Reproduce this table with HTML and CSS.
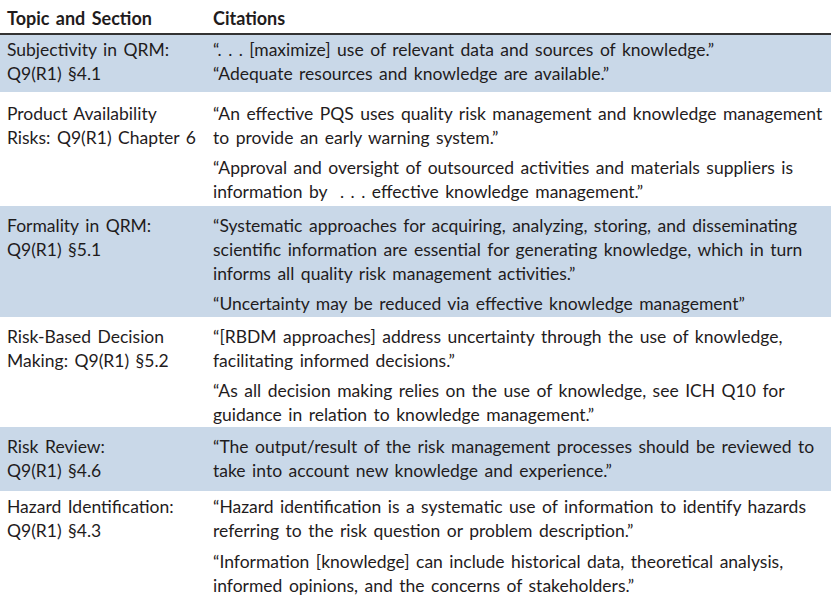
FILE: index.html
```html
<!DOCTYPE html>
<html>
<head>
<meta charset="utf-8">
<link rel="stylesheet" href="styles.css">
</head>
<body>
<table class="cit">
  <thead>
    <tr><th class="c1">Topic and Section</th><th class="c2">Citations</th></tr>
  </thead>
  <tbody>
    <tr class="blue r1">
      <td>Subjectivity in QRM:<br>Q9(R1) §4.1</td>
      <td><p>“. . . [maximize] use of relevant data and sources of knowledge.”<br>“Adequate resources and knowledge are available.”</p></td>
    </tr>
    <tr class="r2">
      <td>Product Availability<br>Risks: Q9(R1) Chapter 6</td>
      <td><p>“An effective PQS uses quality risk management and knowledge management<br>to provide an early warning system.”</p><p>“Approval and oversight of outsourced activities and materials suppliers is<br>information by &nbsp;. . . effective knowledge management.”</p></td>
    </tr>
    <tr class="blue r3">
      <td>Formality in QRM:<br>Q9(R1) §5.1</td>
      <td><p>“Systematic approaches for acquiring, analyzing, storing, and disseminating<br>scientific information are essential for generating knowledge, which in turn<br>informs all quality risk management activities.”</p><p>“Uncertainty may be reduced via effective knowledge management”</p></td>
    </tr>
    <tr class="r4">
      <td>Risk-Based Decision<br>Making: Q9(R1) §5.2</td>
      <td><p>“[RBDM approaches] address uncertainty through the use of knowledge,<br>facilitating informed decisions.”</p><p>“As all decision making relies on the use of knowledge, see ICH Q10 for<br>guidance in relation to knowledge management.”</p></td>
    </tr>
    <tr class="blue r5">
      <td>Risk Review:<br>Q9(R1) §4.6</td>
      <td><p>“The output/result of the risk management processes should be reviewed to<br>take into account new knowledge and experience.”</p></td>
    </tr>
    <tr class="r6">
      <td>Hazard Identification:<br>Q9(R1) §4.3</td>
      <td><p>“Hazard identification is a systematic use of information to identify hazards<br>referring to the risk question or problem description.”</p><p>“Information [knowledge] can include historical data, theoretical analysis,<br>informed opinions, and the concerns of stakeholders.”</p></td>
    </tr>
  </tbody>
</table>
</body>
</html>
```
FILE: styles.css
```css
html, body { margin: 0; padding: 0; background: #fff; }
body { font-family: Lato, "Noto Sans", sans-serif; color: #1f1c1d; font-size: 17.5px; word-spacing: 2px; }
.cit { width: 831px; border-collapse: collapse; }
.cit th { text-align: left; font-weight: bold; font-size: 18px; height: 34px; padding: 3px 0 0 7px; border-bottom: 2px solid #333; vertical-align: middle; box-sizing: border-box; }
.cit th.c2 { padding-left: 7px; }
.cit td { vertical-align: top; line-height: 24px; padding: 8px 4px 0 7px; white-space: nowrap; box-sizing: border-box; }
.cit td:first-child { width: 206px; }
.cit tr.blue td { background: #c9d8e8; }
.cit p { margin: 0; }
.cit p + p { margin-top: 6px; }
.r1 { height: 58px; }
.r1 td { padding-top: 3px; }
.r2 { height: 114px; }
.r2 td { padding-top: 10px; }
.r3 { height: 111px; }
.r4 { height: 110px; }
.r5 { height: 64px; }
.r6 td { padding-top: 4px; }
.r6 p + p { margin-top: 7px; }
```
